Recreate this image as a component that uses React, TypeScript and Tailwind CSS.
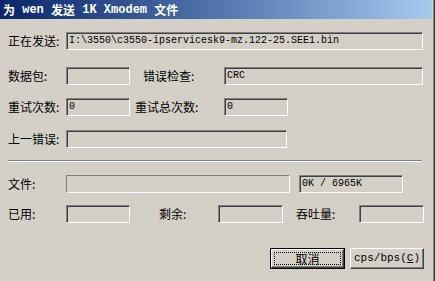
import type { ReactNode } from 'react';

const sunken =
  'flex items-center h-[18px] px-[2px] bg-[#d4d0c8] border border-t-[#808080] border-l-[#808080] border-b-white border-r-white shadow-[inset_1px_1px_0_#404040,inset_-1px_-1px_0_#d4d0c8]';

const mono = "font-['Liberation_Mono','DejaVu_Sans_Mono',monospace] text-[10px] leading-none text-black";

function Label({ children, className = '' }: { children: ReactNode; className?: string }) {
  return <div className={`shrink-0 whitespace-nowrap text-[12px] leading-none ${className}`}>{children}</div>;
}

function Field({ w, value }: { w: string; value?: string }) {
  return (
    <div className={`${sunken} ${w}`}>
      <span className={mono}>{value}</span>
    </div>
  );
}

export default function App() {
  return (
    <div className="flex w-[436px] h-[281px] overflow-hidden bg-[#d4d0c8] font-['Noto_Sans_CJK_SC','Noto_Sans',sans-serif] text-black">
      <div className="flex flex-col w-[432px] shrink-0">
        {/* Title bar */}
        <div className="flex items-center h-[19px] pl-[3px] bg-gradient-to-r from-[#0a246a] to-[#a6caf0] text-white font-bold text-[12px] leading-none whitespace-pre">
          <span>为</span>
          <span className="font-['Liberation_Mono',monospace] text-[12px]"> wen </span>
          <span>发送</span>
          <span className="font-['Liberation_Mono',monospace] text-[12px]"> 1K Xmodem </span>
          <span>文件</span>
        </div>

        <div className="flex flex-col pl-[8px]">
          {/* Sending */}
          <div className="flex items-center mt-[13px]">
            <Label className="w-[58px]">正在发送:</Label>
            <Field w="w-[357px]" value="I:\3550\c3550-ipservicesk9-mz.122-25.SEE1.bin" />
          </div>

          {/* Packets / error check */}
          <div className="flex items-center mt-[17px]">
            <Label className="w-[58px]">数据包:</Label>
            <Field w="w-[64px]" />
            <Label className="w-[94px] pl-[13px]">错误检查:</Label>
            <Field w="w-[199px]" value="CRC" />
          </div>

          {/* Retries */}
          <div className="flex items-center mt-[13px]">
            <Label className="w-[58px]">重试次数:</Label>
            <Field w="w-[64px]" value="0" />
            <Label className="w-[94px] pl-[5px]">重试总次数:</Label>
            <Field w="w-[64px]" value="0" />
          </div>

          {/* Last error */}
          <div className="flex items-center mt-[14px]">
            <Label className="w-[58px]">上一错误:</Label>
            <Field w="w-[221px]" />
          </div>

          {/* Separator */}
          <div className="mt-[12px] w-[414px] h-[2px] border-t border-t-[#808080] border-b border-b-white" />

          {/* File progress */}
          <div className="flex items-center mt-[13px]">
            <Label className="w-[58px]">文件:</Label>
            <div className="w-[224px] h-[18px] border border-t-[#808080] border-l-[#808080] border-b-white border-r-white" />
            <div className="ml-[9px]">
              <Field w="w-[104px]" value="0K / 6965K" />
            </div>
          </div>

          {/* Used / remaining / throughput */}
          <div className="flex items-center mt-[12px]">
            <Label className="w-[58px]">已用:</Label>
            <Field w="w-[64px]" />
            <Label className="w-[88px] pl-[29px]">剩余:</Label>
            <Field w="w-[65px]" />
            <Label className="w-[76px] pl-[13px]">吞吐量:</Label>
            <Field w="w-[65px]" />
          </div>

          {/* Buttons */}
          <div className="flex justify-end gap-[5px] mt-[25px] pr-[8px]">
            <button className="w-[75px] h-[21px] p-0 border border-black bg-[#d4d0c8]">
              <div className="h-full border border-t-white border-l-white border-b-[#404040] border-r-[#404040] shadow-[inset_-1px_-1px_0_#808080] p-[2px]">
                <div className="flex items-center justify-center h-full border border-dotted border-black text-[12px] leading-none">
                  取消
                </div>
              </div>
            </button>
            <button className="flex items-center justify-center w-[74px] h-[21px] p-0 bg-[#d4d0c8] border border-t-white border-l-white border-b-[#404040] border-r-[#404040] shadow-[inset_-1px_-1px_0_#808080]">
              <span className={`${mono} text-[11px]`}>
                cps/bps(<span className="underline">C</span>)
              </span>
            </button>
          </div>
        </div>
      </div>

      {/* Window right frame */}
      <div className="w-px shrink-0 bg-[#d4d0c8]" />
      <div className="w-px shrink-0 bg-[#808080]" />
      <div className="w-px shrink-0 bg-[#404040]" />
      <div className="w-px shrink-0 bg-[#d4d0c8]" />
    </div>
  );
}
